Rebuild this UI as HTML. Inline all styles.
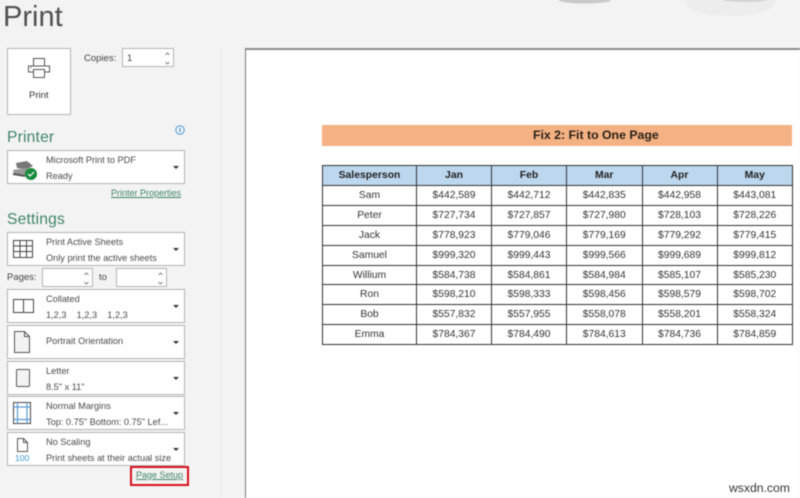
<!DOCTYPE html>
<html><head><meta charset="utf-8"><style>
html,body{margin:0;padding:0}
body{width:800px;height:498px;overflow:hidden;background:#f3f3f3;position:relative;font-family:"Liberation Sans",sans-serif;color:#444}
#w{position:absolute;left:0;top:0;width:800px;height:498px;filter:blur(.4px)}
.a{position:absolute;white-space:nowrap}
.box{position:absolute;left:7px;width:176px;background:#fff;border:1px solid #b4b4b4}
.t{position:absolute;left:39px;font-size:9.2px;line-height:12px;color:#4a4a4a;white-space:nowrap}
.arr{position:absolute;left:165px;width:0;height:0;border-left:3px solid transparent;border-right:3px solid transparent;border-top:3.5px solid #333}
.g{color:#3f8467}
.spin{position:absolute;background:#fff;border:1px solid #b4b4b4;box-sizing:border-box}
.spin svg{position:absolute;right:3px;top:3px}
svg{position:absolute;overflow:visible}
table{position:absolute;left:322px;top:165px;border-collapse:collapse;table-layout:fixed;width:470px;font-family:"Liberation Sans",sans-serif;font-size:10.3px;color:#333;background:#fff}
td,th{border:1px solid #333;padding:0;text-align:center;height:19.9px;box-sizing:border-box;font-weight:normal;overflow:hidden;white-space:nowrap}
th{background:#bdd7ee;font-weight:bold;color:#222;font-size:10.4px;height:20px}
</style></head><body><div id="w">
<div class="a" style="left:3px;top:-3px;font-size:29px;line-height:40px;color:#505050">Print</div>
<svg style="left:0;top:0" width="800" height="50"><ellipse cx="585" cy="0" rx="26" ry="3.5" fill="#c9c9c9"/><ellipse cx="730" cy="2" rx="45" ry="14" fill="#ededed"/><ellipse cx="745" cy="0" rx="22" ry="2" fill="#d4d4d4"/></svg>
<div class="a" style="left:7px;top:48px;width:62px;height:65px;background:#fff;border:1px solid #b4b4b4"></div>
<svg style="left:27px;top:57px" width="24" height="24" fill="none" stroke="#555" stroke-width="1"><path d="M6.5 9V1.5h11V9M6.5 15H1.5V9h21v6h-5M6.5 12.5h11v8h-11z"/><path d="M3.5 10.8h1" stroke="#444"/></svg>
<div class="a" style="left:29px;top:90px;font-size:9.5px;line-height:12px;color:#333">Print</div>
<div class="a" style="left:84px;top:53px;font-size:9.5px;line-height:12px">Copies:</div>
<div class="spin" style="left:122px;top:48px;width:52px;height:19px"><span class="a" style="left:4px;top:4px;font-size:9.5px;line-height:12px">1</span><svg width="5" height="13" fill="none" stroke="#666" stroke-width=".8"><path d="M.5 3 2.5 1l2 2M.5 10l2 2 2-2"/></svg></div>
<div class="a g" style="left:7px;top:128px;font-size:15.6px;line-height:20px;letter-spacing:.2px">Printer</div>
<svg style="left:175px;top:125px" width="10" height="10"><circle cx="5" cy="5" r="4.2" fill="none" stroke="#4a9ad4" stroke-width="1"/><path d="M5 2.8v4.4" stroke="#4a9ad4" stroke-width="1.2"/></svg>
<div class="box" style="top:150px;height:32px"><span class="t" style="left:38px;top:3px">Microsoft Print to PDF</span><span class="t" style="left:38px;top:19px">Ready</span><i class="arr" style="top:15px"></i>
<svg style="left:3px;top:9px" width="26" height="20"><path d="M5 3 16 1l6 5-6 3L6 8z" fill="#777"/><path d="M2 10l12-2 6 4-5 4-12-2z" fill="#999"/><path d="M2 13l12 2v2L2 15z" fill="#555"/><circle cx="20" cy="14" r="6" fill="#1a8a3c"/><path d="M17 14l2 2 4-4" fill="none" stroke="#fff" stroke-width="1.2"/></svg></div>
<div class="a g" style="left:111px;top:187px;font-size:9px;line-height:12px;text-decoration:underline">Printer Properties</div>
<div class="a g" style="left:7px;top:210px;font-size:15.6px;line-height:20px;letter-spacing:.2px">Settings</div>
<div class="box" style="top:232px;height:32px"><span class="t" style="left:38px;top:3px">Print Active Sheets</span><span class="t" style="left:38px;top:19px">Only print the active sheets</span><i class="arr" style="top:15px"></i>
<svg style="left:4px;top:6px" width="23" height="20" fill="none" stroke="#444" stroke-width="1"><path d="M1.5 1.5h19v17h-19zM1.5 7h19M1.5 12.5h19M8 1.5v17M14.5 1.5v17"/></svg></div>
<div class="a" style="left:7px;top:272px;font-size:9.5px;line-height:12px">Pages:</div>
<div class="spin" style="left:42px;top:268px;width:51px;height:19px"><svg width="5" height="13" fill="none" stroke="#666" stroke-width=".8"><path d="M.5 3 2.5 1l2 2M.5 10l2 2 2-2"/></svg></div>
<div class="a" style="left:99px;top:272px;font-size:9.5px;line-height:12px">to</div>
<div class="spin" style="left:116px;top:268px;width:51px;height:19px"><svg width="5" height="13" fill="none" stroke="#666" stroke-width=".8"><path d="M.5 3 2.5 1l2 2M.5 10l2 2 2-2"/></svg></div>
<div class="box" style="top:289px;height:32px"><span class="t" style="left:38px;top:3px">Collated</span><span class="t" style="left:38px;top:19px">1,2,3 &nbsp; &nbsp;1,2,3 &nbsp; &nbsp;1,2,3</span><i class="arr" style="top:15px"></i>
<svg style="left:4px;top:8px" width="23" height="16" fill="none" stroke="#444" stroke-width="1"><path d="M1.5 1.5h10v13h-10zM11.5 1.5h10v13h-10z"/></svg></div>
<div class="box" style="top:325px;height:32px"><span class="t" style="left:38px;top:9px">Portrait Orientation</span><i class="arr" style="top:15px"></i>
<svg style="left:5px;top:4px" width="18" height="24" fill="#f3f3f3" stroke="#555" stroke-width="1"><path d="M1.5 1.5h10l5 5v16h-15z"/><path d="M11.5 1.5v5h5" fill="none"/></svg></div>
<div class="box" style="top:361px;height:32px"><span class="t" style="left:38px;top:3px">Letter</span><span class="t" style="left:38px;top:19px">8.5" x 11"</span><i class="arr" style="top:15px"></i>
<svg style="left:7px;top:6px" width="16" height="20" fill="#f3f3f3" stroke="#555" stroke-width="1"><rect x="1.5" y="1.5" width="13" height="17" rx="1"/></svg></div>
<div class="box" style="top:396px;height:32px"><span class="t" style="left:38px;top:3px">Normal Margins</span><span class="t" style="left:38px;top:19px">Top: 0.75" Bottom: 0.75" Lef...</span><i class="arr" style="top:15px"></i>
<svg style="left:5px;top:5px" width="19" height="23" fill="none"><rect x=".5" y=".5" width="17" height="21" stroke="#444"/><path d="M.5 5h17M.5 17.5h17M4.5.5v21M14 .5v21" stroke="#5b9bd5" stroke-width="1.2"/></svg></div>
<div class="box" style="top:432px;height:32px"><span class="t" style="left:38px;top:3px">No Scaling</span><span class="t" style="left:38px;top:19px">Print sheets at their actual size</span><i class="arr" style="top:15px"></i>
<svg style="left:8px;top:4px" width="13" height="16" fill="#fff" stroke="#555" stroke-width="1"><path d="M1.5 1.5h6l4 4v9h-10z"/><path d="M7.5 1.5v4h4" fill="none"/></svg><span class="a" style="left:7px;top:20px;font-size:8.5px;line-height:10px;color:#3f94d2">100</span></div>
<div class="a" style="left:130px;top:466px;width:55px;height:16px;border:2px solid #d8101f"></div>
<div class="a g" style="left:136px;top:469px;font-size:9px;line-height:12px;text-decoration:underline">Page Setup</div>
<div class="a" style="left:220px;top:48px;width:1px;height:450px;background:#ebebeb"></div>
<div class="a" style="left:245px;top:48px;width:555px;height:450px;background:#fff;border-left:1px solid #777;border-top:2px solid #8c8c8c;box-sizing:border-box"></div>
<div class="a" style="left:322px;top:125px;width:470px;height:21px;background:#f4b183"></div>
<div class="a" style="left:533px;top:125px;font:bold 12.3px/21px 'Liberation Sans',sans-serif;color:#2a2118">Fix 2: Fit to One Page</div>
<table><colgroup><col style="width:94px"><col style="width:75px"><col style="width:75px"><col style="width:75.5px"><col style="width:75px"><col style="width:75.5px"></colgroup>
<tr><th>Salesperson</th><th>Jan</th><th>Feb</th><th>Mar</th><th>Apr</th><th>May</th></tr>
<tr><td>Sam</td><td>$442,589</td><td>$442,712</td><td>$442,835</td><td>$442,958</td><td>$443,081</td></tr>
<tr><td>Peter</td><td>$727,734</td><td>$727,857</td><td>$727,980</td><td>$728,103</td><td>$728,226</td></tr>
<tr><td>Jack</td><td>$778,923</td><td>$779,046</td><td>$779,169</td><td>$779,292</td><td>$779,415</td></tr>
<tr><td>Samuel</td><td>$999,320</td><td>$999,443</td><td>$999,566</td><td>$999,689</td><td>$999,812</td></tr>
<tr><td>Willium</td><td>$584,738</td><td>$584,861</td><td>$584,984</td><td>$585,107</td><td>$585,230</td></tr>
<tr><td>Ron</td><td>$598,210</td><td>$598,333</td><td>$598,456</td><td>$598,579</td><td>$598,702</td></tr>
<tr><td>Bob</td><td>$557,832</td><td>$557,955</td><td>$558,078</td><td>$558,201</td><td>$558,324</td></tr>
<tr><td>Emma</td><td>$784,367</td><td>$784,490</td><td>$784,613</td><td>$784,736</td><td>$784,859</td></tr>
</table>
<div class="a" style="left:729px;top:481px;font-size:12.2px;line-height:15px;color:#333">wsxdn.com</div>
</div></body></html>
